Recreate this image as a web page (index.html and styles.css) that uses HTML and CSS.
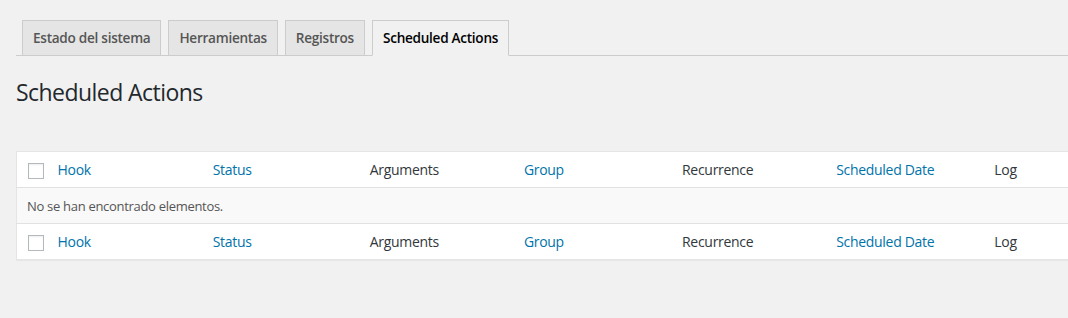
FILE: index.html
```html
<!DOCTYPE html>
<html lang="es">
<head>
<meta charset="utf-8">
<title>Scheduled Actions</title>
<link rel="stylesheet" href="styles.css">
</head>
<body>
<div class="wrap">
  <nav class="nav-tab-wrapper">
    <a class="nav-tab" href="#">Estado del sistema</a>
    <a class="nav-tab" href="#">Herramientas</a>
    <a class="nav-tab" href="#">Registros</a>
    <a class="nav-tab nav-tab-active" href="#">Scheduled Actions</a>
  </nav>
  <h1 class="page-title">Scheduled Actions</h1>
  <div class="table-clip">
    <table class="list-table">
      <colgroup>
        <col class="col-check">
        <col class="col-hook"><col class="col-status"><col class="col-args"><col class="col-group"><col class="col-recur"><col class="col-date"><col class="col-log">
      </colgroup>
      <thead>
        <tr>
          <td class="check-column"><span class="checkbox"></span></td>
          <th><a href="#">Hook</a></th>
          <th><a href="#">Status</a></th>
          <th>Arguments</th>
          <th><a href="#">Group</a></th>
          <th>Recurrence</th>
          <th><a href="#">Scheduled Date</a></th>
          <th>Log</th>
        </tr>
      </thead>
      <tbody>
        <tr class="no-items">
          <td colspan="8">No se han encontrado elementos.</td>
        </tr>
      </tbody>
      <tfoot>
        <tr>
          <td class="check-column"><span class="checkbox"></span></td>
          <th><a href="#">Hook</a></th>
          <th><a href="#">Status</a></th>
          <th>Arguments</th>
          <th><a href="#">Group</a></th>
          <th>Recurrence</th>
          <th><a href="#">Scheduled Date</a></th>
          <th>Log</th>
        </tr>
      </tfoot>
    </table>
  </div>
</div>
</body>
</html>
```
FILE: styles.css
```css
html, body {
  margin: 0;
  padding: 0;
  background: #f1f1f1;
  overflow: hidden;
}
body {
  font-family: "Open Sans", "Noto Sans", sans-serif;
  color: #444;
  font-size: 13px;
}
.wrap {
  padding: 20px 0 0 16px;
}
.nav-tab-wrapper {
  display: flex;
  border-bottom: 1px solid #ccc;
  padding-left: 6px;
}
.nav-tab {
  display: block;
  margin-right: 7px;
  margin-bottom: -1px;
  padding: 5px 10px;
  font-size: 13.6px;
  line-height: 24px;
  font-weight: 600;
  color: #555;
  background: #e5e5e5;
  border: 1px solid #ccc;
  text-decoration: none;
  letter-spacing: -0.28px;
}
.nav-tab-active {
  background: #f1f1f1;
  color: #000;
  border-bottom-color: #f1f1f1;
}
.page-title {
  margin: 22px 0 0 0;
  font-size: 23px;
  font-weight: 400;
  line-height: 29px;
  color: #23282d;
  letter-spacing: -0.55px;
}
.table-clip {
  margin-top: 44px;
  width: 1052px;
  overflow: hidden;
  padding-bottom: 2px;
}
.list-table {
  table-layout: fixed;
  width: 1120px;
  border-collapse: collapse;
  background: #fff;
  border: 1px solid #e5e5e5;
  box-shadow: 0 1px 1px rgba(0,0,0,.04);
}
.col-check { width: 31px; }
.col-hook { width: 155px; }
.col-status { width: 157px; }
.col-args { width: 154px; }
.col-group { width: 158px; }
.col-recur { width: 154px; }
.col-date { width: 158px; }
.col-log { width: 151px; }
.list-table th,
.list-table td {
  text-align: left;
  font-weight: 400;
  font-size: 14px;
  line-height: 19px;
  padding: 8px 10px;
  color: #32373c;
  white-space: nowrap;
  letter-spacing: -0.3px;
}
.list-table thead tr { border-bottom: 1px solid #e1e1e1; }
.list-table tfoot tr { border-top: 1px solid #e1e1e1; }
.list-table a {
  color: #0073aa;
  text-decoration: none;
}
.list-table .check-column {
  padding: 8px 0 0 11px;
  vertical-align: top;
}
.checkbox {
  display: block;
  width: 14px;
  height: 14px;
  border: 1px solid #b4b9be;
  background: #fff;
  box-shadow: inset 0 1px 2px rgba(0,0,0,.07);
  margin-top: 3px;
}
.no-items td {
  background: #f9f9f9;
  font-size: 13px;
  color: #555;
  padding: 9px 10px 7px;
}
```
